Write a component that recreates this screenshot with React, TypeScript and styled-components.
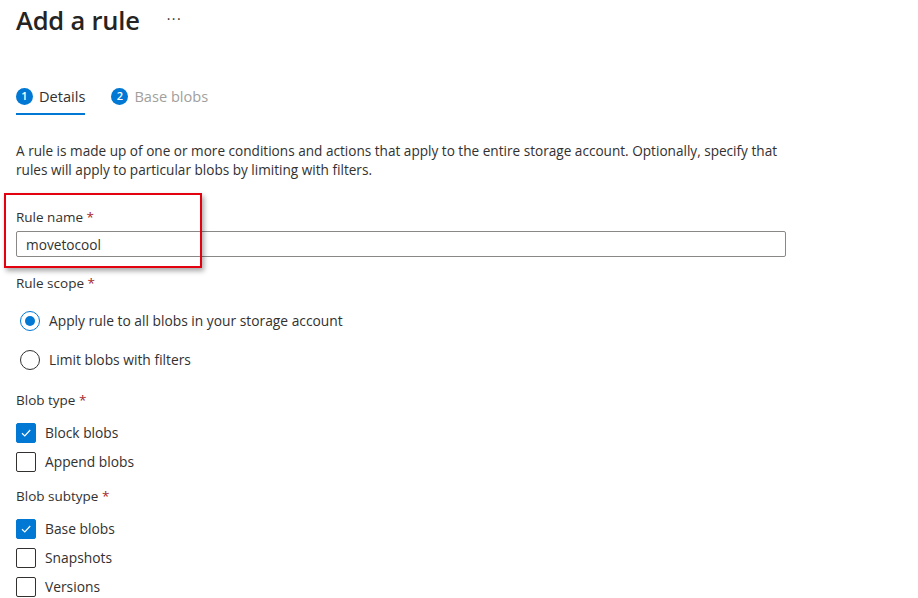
import {FC} from "react";
import styled, {createGlobalStyle} from "styled-components";

const GlobalStyle = createGlobalStyle`
  html, body {
    margin: 0;
    padding: 0;
    background: #ffffff;
  }
  body {
    font-family: "Open Sans", "Noto Sans", "Liberation Sans", sans-serif;
    color: #323130;
  }
`

const Page = styled.div`
  width: 918px;
  height: 598px;
  overflow: hidden;
  padding: 0 16px;
  box-sizing: border-box;
`

const Header = styled.div`
  display: flex;
  align-items: center;
  height: 40px;
`

const Title = styled.h1`
  margin: 0;
  font-size: 25.5px;
  font-weight: 600;
  color: #252423;
  letter-spacing: -0.2px;
`

const More = styled.span`
  margin-left: 27px;
  font-size: 14px;
  color: #323130;
  letter-spacing: 1.5px;
  position: relative;
  top: -2px;
`

const Tabs = styled.div`
  display: flex;
  gap: 26px;
  margin-top: 44px;
`

const Tab = styled.div<{ active?: boolean }>`
  display: flex;
  align-items: center;
  gap: 6px;
  padding: 3px 0 8px;
  line-height: 18px;
  border-bottom: 2px solid ${({active}) => active ? '#0078d4' : 'transparent'};
  font-size: 14.6px;
  color: ${({active}) => active ? '#323130' : '#a19f9d'};
`

const StepNum = styled.span`
  width: 17px;
  height: 17px;
  border-radius: 50%;
  background: #0078d4;
  color: #fff;
  font-size: 11px;
  font-weight: 600;
  display: flex;
  align-items: center;
  justify-content: center;
`

const Description = styled.p`
  margin: 26px 0 0;
  font-size: 13.6px;
  line-height: 19px;
  width: 790px;
`

const NameSection = styled.div`
  position: relative;
  margin-top: 28px;
  width: 770px;
`

const Highlight = styled.div`
  position: absolute;
  left: -12px;
  top: -14px;
  width: 194px;
  height: 71px;
  border: 2px solid #e3000f;
  box-shadow: 2px 3px 5px rgba(0, 0, 0, 0.35);
  pointer-events: none;
`

const Label = styled.div<{ gap?: number }>`
  font-size: 13.5px;
  line-height: 20px;
  margin-bottom: ${({gap = 4}) => gap}px;
`

const Star = styled.span`
  color: #a4262c;
`

const TextInput = styled.div`
  height: 26px;
  box-sizing: border-box;
  border: 1px solid #8a8886;
  border-radius: 2px;
  padding: 0 9px;
  display: flex;
  align-items: center;
  font-size: 13.7px;
`

const Field = styled.div<{ top: number }>`
  margin-top: ${({top}) => top}px;
`

const OptionRow = styled.div<{ h: number }>`
  display: flex;
  align-items: center;
  height: ${({h}) => h}px;
  font-size: 13.8px;
`

const Radio = styled.span<{ checked?: boolean }>`
  width: 20px;
  height: 20px;
  box-sizing: border-box;
  border-radius: 50%;
  border: 1px solid ${({checked}) => checked ? '#0078d4' : '#323130'};
  margin-left: 4px;
  margin-right: 9px;
  display: flex;
  align-items: center;
  justify-content: center;

  &::after {
    content: "";
    display: ${({checked}) => checked ? 'block' : 'none'};
    width: 10px;
    height: 10px;
    border-radius: 50%;
    background: #0078d4;
  }
`

const Box = styled.span<{ checked?: boolean }>`
  width: 20px;
  height: 20px;
  box-sizing: border-box;
  border-radius: 2px;
  border: 1px solid ${({checked}) => checked ? '#0078d4' : '#323130'};
  background: ${({checked}) => checked ? '#0078d4' : '#fff'};
  margin-right: 9px;
  display: flex;
  align-items: center;
  justify-content: center;
`

const Check: FC = () => (
    <svg width="12" height="12" viewBox="0 0 12 12">
        <path d="M2 6.3 L4.8 9 L10.2 3" fill="none" stroke="#fff" strokeWidth="1.2"/>
    </svg>
)

const CheckOption: FC<{ label: string, checked?: boolean }> = ({label, checked}) => (
    <OptionRow h={29}>
        <Box checked={checked}>{checked && <Check/>}</Box>
        {label}
    </OptionRow>
)

const RadioOption: FC<{ label: string, checked?: boolean }> = ({label, checked}) => (
    <OptionRow h={39}>
        <Radio checked={checked}/>
        {label}
    </OptionRow>
)

export default function App() {
    return (
        <Page>
            <GlobalStyle/>
            <Header>
                <Title>Add a rule</Title>
                <More>···</More>
            </Header>
            <Tabs>
                <Tab active><StepNum>1</StepNum>Details</Tab>
                <Tab><StepNum>2</StepNum>Base blobs</Tab>
            </Tabs>
            <Description>
                A rule is made up of one or more conditions and actions that apply to the entire storage account.
                Optionally, specify that rules will apply to particular blobs by limiting with filters.
            </Description>
            <NameSection>
                <Highlight/>
                <Label gap={4}>Rule name <Star>*</Star></Label>
                <TextInput>movetocool</TextInput>
            </NameSection>
            <Field top={16}>
                <Label gap={8}>Rule scope <Star>*</Star></Label>
                <RadioOption label="Apply rule to all blobs in your storage account" checked/>
                <RadioOption label="Limit blobs with filters"/>
            </Field>
            <Field top={11}>
                <Label gap={8}>Blob type <Star>*</Star></Label>
                <CheckOption label="Block blobs" checked/>
                <CheckOption label="Append blobs"/>
            </Field>
            <Field top={10}>
                <Label gap={8}>Blob subtype <Star>*</Star></Label>
                <CheckOption label="Base blobs" checked/>
                <CheckOption label="Snapshots"/>
                <CheckOption label="Versions"/>
            </Field>
        </Page>
    )
}
